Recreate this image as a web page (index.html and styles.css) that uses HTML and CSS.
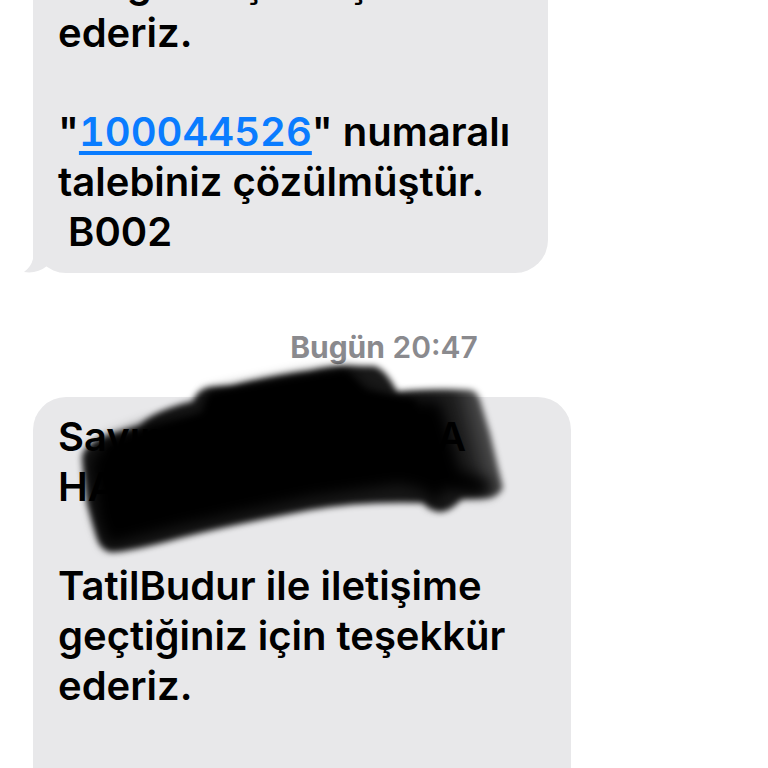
FILE: index.html
```html
<!DOCTYPE html>
<html lang="tr">
<head>
  <meta charset="UTF-8">
  <meta name="viewport" content="width=device-width, initial-scale=1.0">
  <title>Mesajlar</title>
  <link rel="stylesheet" href="styles.css">
</head>
<body>

  <main class="chat">
    <div class="bubble bubble-first">
      <p>aldığınız için teşekkür<br>ederiz.</p>
      <p>"<a href="#">100044526</a>" numaralı<br>talebiniz çözülmüştür.<br>&nbsp;B002</p>
      <svg class="tail" viewBox="0 0 40 40" aria-hidden="true">
        <path d="M9 0 V26 Q7 34 0 39 Q13 41 23 33 L24 0 Z" fill="#e8e8ea"/>
      </svg>
    </div>

    <div class="stamp"><strong>Bugün</strong> 20:47</div>

    <div class="bubble bubble-second">
      <p>Sayın <span class="initial">A</span><br>HA</p>
      <p>TatilBudur ile iletişime<br>geçtiğiniz için teşekkür<br>ederiz.</p>
      <p>Sorununuz onay metnini</p>

      <!-- marker scribble over the name -->
      <svg class="scribble" viewBox="60 350 460 220" aria-hidden="true">
        <defs>
          <filter id="edge" x="-10%" y="-10%" width="120%" height="120%"><feGaussianBlur stdDeviation="3"/></filter>
          <filter id="core" x="-10%" y="-10%" width="120%" height="120%"><feGaussianBlur stdDeviation="7"/></filter>
          <linearGradient id="fade" gradientUnits="userSpaceOnUse" x1="430" y1="445" x2="496" y2="428">
            <stop offset="0" stop-opacity=".9"/>
            <stop offset=".5" stop-opacity=".87"/>
            <stop offset="1" stop-opacity=".6"/>
          </linearGradient>
        </defs>
        <path filter="url(#edge)" fill="url(#fade)" d="M82 457 Q84 442 113 434 L140 426 Q152 411 193 401 Q198 388 212 387 L232 386 Q270 376 310 371 Q330 366 347 366 H374 Q386 369 397 392 Q430 388 470 390 Q477 391 480 400 L490 433 L503 488 Q498 497 488 498 L462 499 Q450 512 440 512 Q430 511 423 503 Q360 501 310 510 Q230 525 180 538 Q130 552 110 552 Q100 549 97 538 L87 503 Z"/>
        <path filter="url(#core)" d="M90 462 L106 440 L150 424 L202 414 L208 394 L300 376 L350 370 L364 388 L398 400 L440 402 L452 440 L460 470 L494 484 L484 494 L442 490 L436 505 L424 490 L400 484 L310 497 L180 526 L108 545 L98 520 Z"/>
        <path filter="url(#edge)" d="M108 452 L140 434 L204 414 L210 394 L345 372 L365 392 L415 400 L425 450 L300 485 L130 510 Z"/>
      </svg>
    </div>
  </main>

</body>
</html>
```
FILE: styles.css
```css
* {
  box-sizing: border-box;
}

body {
  margin: 0;
  background: #fff;
  color: #000;
  font-family: Inter, "Liberation Sans", sans-serif;
}

.chat {
  display: flex;
  flex-direction: column;
  align-items: flex-start;
  height: 100vh;
  overflow: hidden;
}

.bubble {
  position: relative;
  flex-shrink: 0;
  margin-left: 33px;
  padding: 15px 20px 16px 25px;
  border-radius: 33px;
  background: #e8e8ea;
  font-size: 40px;
  font-weight: 600;
  line-height: 50px;
  white-space: nowrap;
}

.bubble p {
  margin: 0;
}

.bubble p + p {
  margin-top: 49px;
}

.bubble a {
  color: #0a7cff;
  font-variant-numeric: tabular-nums;
  text-decoration: underline;
  text-decoration-thickness: 4px;
  text-underline-offset: 5px;
  text-decoration-skip-ink: none;
}

/* scrolled past the top of the thread */
.bubble-first {
  width: 67%;
  margin-top: -57px;
}

.tail {
  position: absolute;
  left: -9px;
  bottom: 0;
  width: 40px;
  height: 40px;
}

.stamp {
  align-self: stretch;
  padding: 55px 0 31px;
  color: #8a8a8e;
  font-size: 30px;
  font-weight: 600;
  line-height: 38px;
  text-align: center;
}

.stamp strong {
  font-weight: 700;
}

.bubble-second {
  width: 70%;
}

.initial {
  margin-left: 262px;
}

.scribble {
  position: absolute;
  top: -47px;
  left: 27px;
  width: 460px;
  height: 220px;
}
```
